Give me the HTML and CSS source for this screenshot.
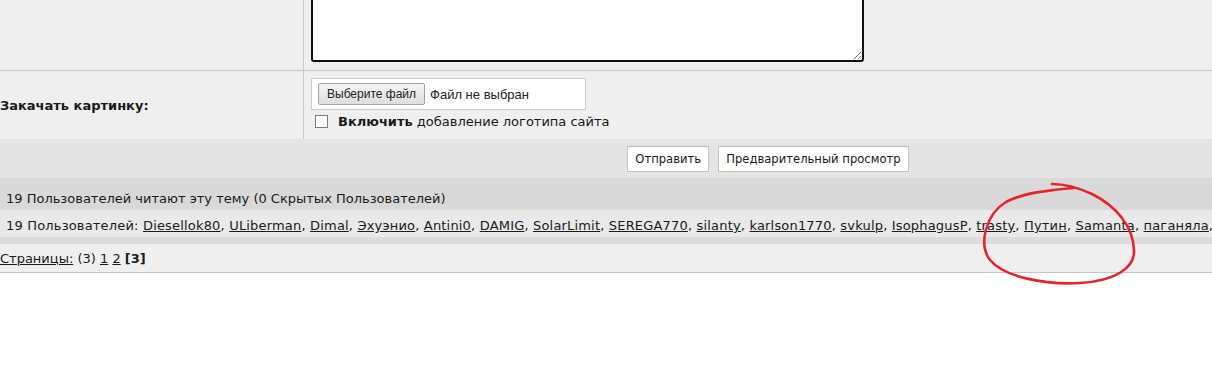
FILE: index.html
```html
<!DOCTYPE html>
<html lang="ru">
<head>
<meta charset="utf-8">
<title>Ответ в теме</title>
<link rel="stylesheet" href="styles.css">
</head>
<body>
<div class="form">
  <div class="row r1">
    <div class="lbl"></div>
    <div class="field field-bottom">
      <textarea class="msg"></textarea>
    </div>
  </div>
  <div class="row r2">
    <div class="lbl"><b>Закачать картинку:</b></div>
    <div class="field field-col">
      <div class="filebox">
        <span class="filebtn">Выберите файл</span>
        <span class="filename">Файл не выбран</span>
      </div>
      <label class="check"><span class="cb"></span><span class="check-text"><b>Включить</b> добавление логотипа сайта</span></label>
    </div>
  </div>
</div>
<div class="buttons">
  <div class="lbl-empty"></div>
  <div class="btns">
    <span class="btn">Отправить</span>
    <span class="btn">Предварительный просмотр</span>
  </div>
</div>
<div class="online-head">19 Пользователей читают эту тему (0 Скрытых Пользователей)</div>
<div class="online-list">19 Пользователей: <a href="#">Diesellok80</a>, <a href="#">ULiberman</a>, <a href="#">Dimal</a>, <a href="#">Эхуэнио</a>, <a href="#">Antini0</a>, <a href="#">DAMIG</a>, <a href="#">SolarLimit</a>, <a href="#">SEREGA770</a>, <a href="#">silanty</a>, <a href="#">karlson1770</a>, <a href="#">svkulp</a>, <a href="#">IsophagusP</a>, <a href="#">trasty</a>, <a href="#">Путин</a>, <a href="#">Samanta</a>, <a href="#">паганяла</a>,</div>
<div class="gap"></div>
<div class="pages"><a href="#">Страницы:</a> (3) <a href="#">1</a> <a href="#">2</a> <b>[3]</b></div>

<svg class="annot" width="1212" height="388" viewBox="0 0 1212 388">
  <path d="M 1074 188 C 1050 190, 1022 193, 1006 202 C 986 214, 978 244, 990 260 C 1004 277, 1045 285, 1080 283 C 1115 281, 1135 268, 1134 250 C 1133 226, 1116 206, 1092 194 C 1079 188, 1066 184, 1052 184" fill="none" stroke="#e3262b" stroke-width="2.6" stroke-linecap="round" stroke-linejoin="round"/>
</svg>
</body>
</html>
```

FILE: styles.css
```css
html, body {
  margin: 0;
  padding: 0;
  background: #ffffff;
}
body {
  font-family: "DejaVu Sans", Verdana, sans-serif;
  font-size: 13px;
  color: #1a1a1a;
  width: 1212px;
  height: 388px;
  overflow: hidden;
  position: relative;
}
a {
  color: #1a1a1a;
  text-decoration: underline;
}

.form {
  background: #efefef;
}
.row {
  display: flex;
  border-bottom: 1px solid #c6c6c6;
}
.r1 {
  height: 70px;
  overflow: hidden;
}
.r2 {
  height: 68px;
  border-bottom: none;
}
.lbl {
  width: 303px;
  flex: none;
  border-right: 1px solid #c8c8c8;
  display: flex;
  align-items: center;
}
.lbl b {
  font-weight: bold;
}
.field {
  flex: 1;
  padding-left: 7px;
}
.field-bottom {
  display: flex;
  align-items: flex-end;
  padding-bottom: 8px;
}
.msg {
  display: block;
  width: 553px;
  height: 120px;
  box-sizing: border-box;
  border: 2px solid #111;
  border-radius: 3px;
  background: #fff;
  margin: 0;
  resize: both;
  outline: none;
}
.field-col {
  display: flex;
  flex-direction: column;
  align-items: flex-start;
  padding-top: 7px;
}
.filebox {
  width: 275px;
  height: 32px;
  box-sizing: border-box;
  border: 1px solid #cbcbcb;
  background: #fff;
  display: flex;
  align-items: center;
  padding-left: 6px;
  font-family: "Liberation Sans", Arial, sans-serif;
}
.filebtn {
  height: 22px;
  box-sizing: border-box;
  border: 1px solid #a3a3a3;
  border-radius: 2px;
  background: linear-gradient(#f4f4f4, #dedede);
  padding: 0 8px;
  font-size: 12px;
  line-height: 20px;
  color: #222;
}
.filename {
  margin-left: 5px;
  font-size: 13px;
  color: #222;
}
.check {
  display: flex;
  align-items: center;
  margin-top: 4px;
  padding-left: 4px;
}
.check-text {
  white-space: nowrap;
}
.cb {
  width: 13px;
  height: 13px;
  box-sizing: border-box;
  border: 1px solid #7a7a7a;
  background: #fff;
  margin-right: 10px;
  flex: none;
}

.buttons {
  display: flex;
  height: 39px;
  background: #e4e4e4;
}
.lbl-empty {
  width: 304px;
  flex: none;
}
.btns {
  flex: 1;
  display: flex;
  justify-content: center;
  align-items: center;
  gap: 9px;
  padding-left: 20px;
}
.btn {
  display: inline-block;
  height: 26px;
  box-sizing: border-box;
  border: 1px solid #c3c3c3;
  background: #fff;
  padding: 0 7px;
  font-size: 11.6px;
  line-height: 24px;
  color: #1a1a1a;
}

.online-head {
  height: 32px;
  line-height: 42px;
  background: #d9d9d9;
  padding-left: 6px;
  white-space: nowrap;
  overflow: hidden;
}
.online-list {
  height: 27px;
  line-height: 32px;
  background: #e9e9e9;
  padding-left: 6px;
  white-space: nowrap;
  overflow: hidden;
  letter-spacing: 0.18px;
}
.gap {
  height: 7px;
  background: #dcdcdc;
}
.pages {
  height: 28px;
  line-height: 29px;
  background: #efefef;
  border-bottom: 1px solid #c4c4c4;
  white-space: nowrap;
}
.pages b {
  font-weight: bold;
}

.annot {
  position: absolute;
  left: 0;
  top: 0;
  pointer-events: none;
}
```
